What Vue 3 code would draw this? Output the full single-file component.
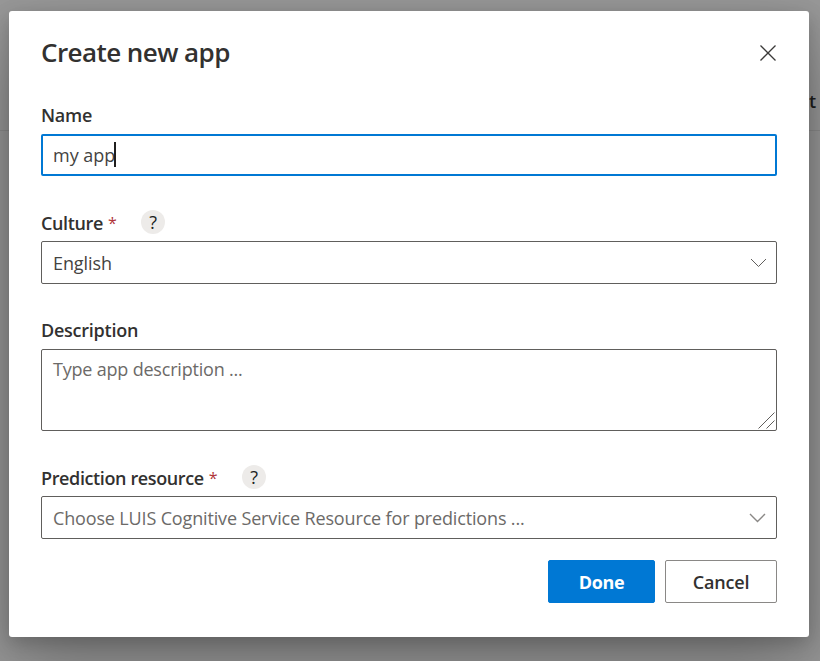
<script setup>
import { ref } from 'vue'

const name = ref('my app')
const culture = ref('English')
</script>

<template>
  <div class="page">
    <div class="page-header"><span class="nav-text">t</span></div>
    <section class="dialog" role="dialog">
      <header class="dialog-header">
        <h1 class="title">Create new app</h1>
        <svg class="close" width="18" height="18" viewBox="0 0 18 18">
          <path d="M1.5 1.5 16.5 16.5M16.5 1.5 1.5 16.5" />
        </svg>
      </header>

      <div class="field name-field">
        <div class="label-row"><span class="label label-name">Name</span></div>
        <div class="box focused">
          <span class="value value-name">{{ name }}</span><span class="caret"></span>
        </div>
      </div>

      <div class="field culture-field">
        <div class="label-row">
          <span class="label label-culture">Culture</span><span class="star">*</span>
          <span class="help">?</span>
        </div>
        <div class="box">
          <span class="value value-culture">{{ culture }}</span>
          <svg class="chevron" width="17" height="10" viewBox="0 0 17 10">
            <path d="M1 1 8.5 8.5 16 1" />
          </svg>
        </div>
      </div>

      <div class="field description-field">
        <div class="label-row"><span class="label label-description">Description</span></div>
        <div class="box area">
          <span class="value placeholder value-description">Type app description ...</span>
          <svg class="grip" width="17" height="17" viewBox="0 0 17 17">
            <path d="M0.5 16.5 16.5 0.5M8.5 16.5 16.5 8.5" />
          </svg>
        </div>
      </div>

      <div class="field prediction-field">
        <div class="label-row">
          <span class="label label-prediction">Prediction resource</span><span class="star">*</span>
          <span class="help">?</span>
        </div>
        <div class="box">
          <span class="value placeholder value-prediction">Choose LUIS Cognitive Service Resource for predictions ...</span>
          <svg class="chevron light" width="17" height="10" viewBox="0 0 17 10">
            <path d="M1 1 8.5 8.5 16 1" />
          </svg>
        </div>
      </div>

      <footer class="actions">
        <button class="button primary"><span class="done-text">Done</span></button>
        <button class="button"><span class="cancel-text">Cancel</span></button>
      </footer>
    </section>
  </div>
</template>

<style>
body {
  margin: 0;
  overflow: hidden;
}
</style>

<style scoped>
.page {
  position: relative;
  box-sizing: border-box;
  width: 820px;
  height: 661px;
  padding: 11px 11px 24px 9px;
  overflow: hidden;
  background: #989898;
  font-family: "Open Sans", "Noto Sans", sans-serif;
  font-size: 18px;
  color: #323130;
}
.page-header {
  position: absolute;
  inset: 0 0 auto 0;
  height: 130px;
  border-bottom: 1px solid #8b8b8b;
}
.nav-text {
  position: absolute;
  left: 809px;
  top: 89px;
  line-height: 25px;
  font-weight: 600;
  color: #1f1e1d;
}
.dialog {
  position: relative;
  box-sizing: border-box;
  width: 800px;
  height: 626px;
  padding: 0 32px;
  border-radius: 3px;
  background: #fff;
  box-shadow: 0 33px 75px rgba(0, 0, 0, 0.26), 0 6px 19px rgba(0, 0, 0, 0.2);
}
.dialog-header {
  display: flex;
  align-items: center;
  justify-content: space-between;
  height: 83px;
}
.title {
  margin: -2px 0 0;
  font-size: 26px;
  line-height: 36px;
  font-weight: 550;
  letter-spacing: -0.56px;
  white-space: nowrap;
}
.close {
  margin: 0 0.5px 0 0;
  fill: none;
  stroke: #3b3a39;
  stroke-width: 1.3;
}
.label-row {
  display: flex;
  align-items: center;
  height: 24px;
  line-height: 24px;
}
.label {
  font-weight: 550;
  letter-spacing: -0.25px;
  white-space: nowrap;
}
.culture-field .label,
.prediction-field .label {
  padding-top: 2px;
  letter-spacing: -0.38px;
}
.star {
  margin-left: 5px;
  padding-top: 1px;
  font-size: 16px;
  color: #b0353a;
}
.help {
  width: 24px;
  height: 24px;
  margin-left: 24.5px;
  border-radius: 50%;
  background: #edebe9;
  text-align: center;
  line-height: 25px;
  color: #201f1e;
}
.box {
  position: relative;
  display: flex;
  align-items: center;
  box-sizing: border-box;
  height: 43px;
  padding: 1px 9px 0 11px;
  border: 1px solid #605e5c;
  border-radius: 2px;
}
.focused {
  height: 42px;
  padding: 0 10px;
  border: 2px solid #0078d4;
}
.value {
  line-height: 24px;
  color: #444341;
  white-space: nowrap;
}
.value-culture {
  letter-spacing: -0.1px;
}
.placeholder {
  color: #6c6a68;
  letter-spacing: -0.15px;
}
.value-description {
  letter-spacing: -0.2px;
}
.caret {
  width: 2px;
  height: 25px;
  margin-top: -2px;
  margin-left: -1px;
  background: #201f1e;
}
.chevron {
  margin-left: auto;
  fill: none;
  stroke: #605e5c;
  stroke-width: 1;
}
.light {
  margin-right: 1px;
  stroke: #8a8886;
  stroke-width: 1.4;
}
.name-field {
  margin-top: 9px;
}
.name-field .label-row {
  margin-bottom: 7px;
}
.culture-field {
  margin-top: 34px;
}
.culture-field .label-row,
.prediction-field .label-row {
  margin-bottom: 7px;
}
.description-field {
  margin-top: 34px;
}
.description-field .label-row {
  margin-bottom: 7px;
}
.area {
  height: 82px;
  align-items: flex-start;
  padding-top: 7px;
}
.grip {
  position: absolute;
  right: 1px;
  bottom: 1px;
  fill: none;
  stroke: #605e5c;
  stroke-width: 1;
}
.prediction-field {
  margin-top: 34px;
}
.actions {
  display: flex;
  justify-content: flex-end;
  gap: 10px;
  margin-top: 21px;
}
.button {
  box-sizing: border-box;
  width: 112px;
  height: 43px;
  padding: 1px 0 0;
  border: 1px solid #8a8886;
  border-radius: 2px;
  background: #fff;
  color: #323130;
  font: 550 18px "Open Sans", "Noto Sans", sans-serif;
  letter-spacing: -0.2px;
}
.primary {
  width: 107px;
  border-color: #0078d4;
  background: #0078d4;
  color: #fff;
  font-weight: 700;
  letter-spacing: -0.3px;
}
</style>
